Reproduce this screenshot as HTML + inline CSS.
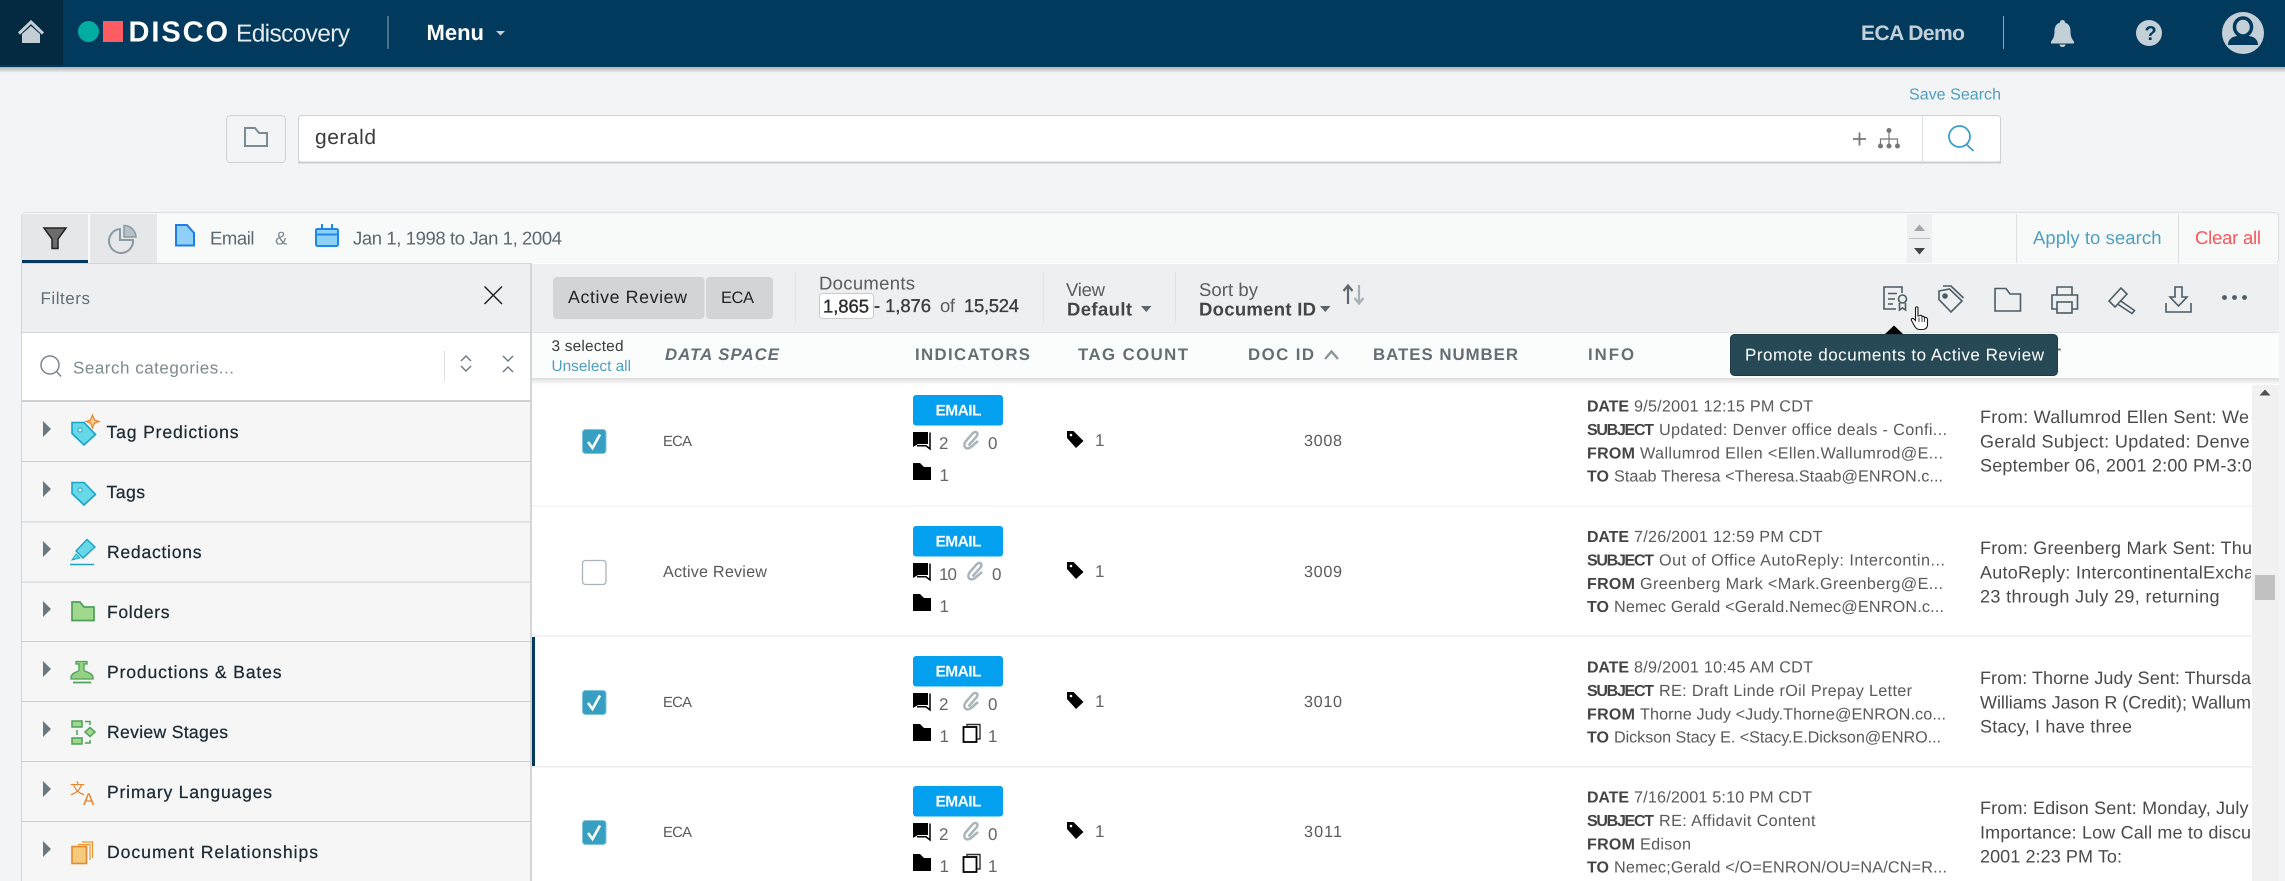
<!DOCTYPE html>
<html lang="en"><head><meta charset="utf-8"><title>DISCO Ediscovery</title>
<style>
html,body{margin:0;padding:0;width:2285px;height:881px;overflow:hidden;background:#f3f4f6}
svg{display:block}
text{font-family:"Liberation Sans",sans-serif;text-rendering:geometricPrecision;white-space:pre}
.b{font-weight:700}
.f17{font-size:18.5px}.f16{font-size:17px}.f15{font-size:16px}.f14{font-size:15.4px}
.lab{font-size:17.6px;fill:#1c2a33;stroke:#1c2a33;stroke-width:.25}
.hd{font-size:16.8px;font-weight:700;fill:#646e74}
.lb{font-size:16px;font-weight:700;fill:#444}
.vl{font-size:16.2px;fill:#5a5a5a}
.ex{font-size:18px;fill:#4a4a4a}
.ct{font-size:17px;fill:#666}
.tb{fill:none;stroke:#4c5c64;stroke-width:1.6}
</style></head><body>
<svg xmlns="http://www.w3.org/2000/svg" width="2285" height="881" viewBox="0 0 2285 881">
<defs>
<linearGradient id="sh" x1="0" y1="0" x2="0" y2="1"><stop offset="0" stop-color="#000" stop-opacity=".28"/><stop offset="1" stop-color="#000" stop-opacity="0"/></linearGradient>
<linearGradient id="sh2" x1="0" y1="0" x2="0" y2="1"><stop offset="0" stop-color="#000" stop-opacity=".14"/><stop offset="1" stop-color="#000" stop-opacity="0"/></linearGradient>
<clipPath id="exc"><rect x="1975" y="378" width="276" height="503"/></clipPath>
<g id="tri"><path d="M43 421 L51 429 L43 437Z" fill="#6a7880"/></g>
<g id="chk"><rect x="582.5" y="429.5" width="23.5" height="24" rx="3" fill="#379fc1" stroke="#7fc4da"/><path d="M588 442 L592.5 448 L600 434.5" fill="none" stroke="#fff" stroke-width="2.6"/></g>
<g id="badge"><rect x="913" y="395" width="90" height="30.5" rx="3" fill="#03a0f0"/><text x="935.5" y="415.5" font-size="15.5" class="b" fill="#fff" textLength="46">EMAIL</text></g>
<g id="cm"><path d="M913 432 H928 V444 H918 L913 447Z" fill="#000"/><path d="M930 432.500 V449 L926 445.800 H917" fill="none" stroke="#000" stroke-width="1.500"/></g>
<g id="fo"><path d="M913 463 H920 L924 467 H931 V480 H913Z" fill="#000"/></g>
<g id="tg"><path d="M1067 431 H1073.500 L1083.500 441 L1076 448 L1067 438Z" fill="#000"/><circle cx="1071" cy="435" r="1.300" fill="#fff"/></g>
<g id="clip"><path d="M968.500 445.500 L976.500 436.500 C979.500 432.500 975 430.500 972.500 433.500 L965.500 441.500 C962 447 967 450.500 971 447 L978 441" fill="none" stroke="#a9b5ba" stroke-width="2.500"/></g>
<g id="cp"><rect x="963.5" y="727" width="13" height="15" fill="#fff" stroke="#000" stroke-width="1.800"/><path d="M967 726 V724.5 H980 V739 H977" fill="none" stroke="#333" stroke-width="1.400"/></g>
</defs>

<rect width="2285" height="881" fill="#f3f4f6"/>

<!-- header -->
<rect width="2285" height="67" fill="#023a5d"/>
<rect y="67" width="2285" height="6" fill="url(#sh)"/>
<rect width="63" height="65" fill="#032a40"/>
<path d="M22 34 L31 26 L40 34 V43 H22Z" fill="#c3ced5"/>
<path d="M19 33.5 L31 22 L43 33.5" fill="none" stroke="#c3ced5" stroke-width="3"/>
<ellipse cx="88.5" cy="31.5" rx="10.5" ry="10.5" fill="#00ada0"/>
<rect x="103" y="21" width="20" height="21" fill="#ff5c62"/>
<text x="128.5" y="41.5" font-size="29" class="b" fill="#fff" textLength="99.5">DISCO</text>
<text x="236" y="41.5" font-size="24.5" fill="#e6ecf0" textLength="114">Ediscovery</text>
<rect x="387.5" y="16" width="1" height="33" fill="#8ea7b7"/>
<text x="426.5" y="40" font-size="22" class="b" fill="#fff" textLength="57.5">Menu</text>
<path d="M496 31 H505 L500.5 35.5Z" fill="#c3ced5"/>
<text x="1861" y="40" font-size="21" class="b" fill="#c3d0d8" textLength="104">ECA Demo</text>
<rect x="2003" y="16" width="1" height="33" fill="#8ea7b7"/>
<path d="M2062.5 20 C2064.5 20 2065 21.5 2065 22.5 C2069 24 2070.5 27 2070.5 31 C2070.5 37 2072 39 2074 41.5 V43.5 H2051 V41.5 C2053 39 2054.5 37 2054.5 31 C2054.5 27 2056 24 2060 22.5 C2060 21.5 2060.5 20 2062.5 20Z M2059.5 44.5 H2065.5 C2065.5 46 2064 47 2062.5 47 C2061 47 2059.5 46 2059.5 44.5Z" fill="#c3d0d8"/>
<circle cx="2149" cy="33" r="13" fill="#c3d0d8"/>
<text x="2144.5" y="40" font-size="20" class="b" fill="#023a5d" textLength="10">?</text>
<ellipse cx="2243" cy="33" rx="21" ry="21" fill="#c3d0d8"/>
<ellipse cx="2243" cy="27" rx="8.5" ry="9" fill="none" stroke="#023a5d" stroke-width="3.5"/>
<path d="M2228 45 C2228 39 2233 36 2238 36 H2248 C2253 36 2258 39 2258 45Z" fill="#023a5d"/>

<!-- search -->
<text x="1909" y="99.5" class="f15" fill="#4f9fc1" textLength="92">Save Search</text>
<rect x="226.5" y="115.5" width="59" height="47" rx="4" fill="#f3f4f6" stroke="#cfd2d5"/>
<path d="M245 128 H255 L259 133 H267 V146 H245Z" fill="none" stroke="#7b8b94" stroke-width="2"/>
<rect x="298.5" y="115.5" width="1702" height="47" rx="3" fill="#fff" stroke="#ced1d4"/>
<rect x="298" y="161.5" width="1703" height="2" fill="#cbced1"/>
<text x="315" y="144" font-size="21" fill="#3c3c3c" textLength="61">gerald</text>
<path d="M1853 139 H1866 M1859.5 132.5 V145.5" stroke="#777" stroke-width="1.800"/>
<circle cx="1889" cy="130.5" r="2.500" fill="#777"/>
<circle cx="1880.5" cy="146" r="2.500" fill="#777"/><circle cx="1889" cy="146" r="2.500" fill="#777"/><circle cx="1897.5" cy="146" r="2.500" fill="#777"/>
<path d="M1889 132 V145 M1880.5 145 V139 H1897.5 V145" fill="none" stroke="#777" stroke-width="1.200"/>
<rect x="1922" y="116" width="1" height="46" fill="#dcdfe1"/>
<circle cx="1959.5" cy="136.5" r="10.500" fill="none" stroke="#3aa0c5" stroke-width="1.800"/>
<path d="M1966.5 144.5 L1973.5 151" stroke="#3aa0c5" stroke-width="1.800"/>

<!-- filter bar -->
<rect x="21.5" y="212.5" width="2257" height="51" rx="4" fill="#f8f9f9" stroke="#dcdfe1"/>
<rect x="22" y="214" width="66" height="46" fill="#e6e7e8"/>
<rect x="22" y="260" width="66" height="3" fill="#023a5d"/>
<rect x="90" y="214" width="67" height="49" fill="#e6e7e8"/>
<path d="M44 228 H66 L58 239 V248.5 H52 V239 Z" fill="#6c6c6c" stroke="#222" stroke-width="1.500"/>
<path d="M120 229 A12 12 0 1 0 133 240 H120 Z" fill="none" stroke="#8a9aa2" stroke-width="2"/>
<path d="M124 225.5 A12 12 0 0 1 136 237 H124Z" fill="#b7c1c6" stroke="#8a9aa2" stroke-width="1.500"/>
<path d="M176 225 H187 L194 233 V245.5 H176Z" fill="#90d0f8" stroke="#1e7ee6" stroke-width="2"/>
<text x="210" y="244.5" class="f17" fill="#5b6770" textLength="44.5">Email</text>
<text x="275" y="244.5" class="f17" fill="#7d8a90" textLength="12.5">&amp;</text>
<rect x="316" y="229" width="22" height="17" rx="1.500" fill="#8fd0f8" stroke="#1e88e6" stroke-width="2"/>
<path d="M316 234.5 H338 M322 224 V229 M332 224 V229" stroke="#1e88e6" stroke-width="2"/>
<text x="353" y="244.5" class="f17" fill="#5b6770" textLength="209">Jan 1, 1998 to Jan 1, 2004</text>
<rect x="1907" y="214" width="25" height="49" fill="#eeeff0"/>
<path d="M1914 231 H1925 L1919.5 224.5Z" fill="#a3a6a8"/>
<rect x="1909" y="238" width="21" height="1" fill="#bcbfc1"/>
<path d="M1914 248 H1925 L1919.5 254.5Z" fill="#444"/>
<rect x="2016" y="214" width="1" height="49" fill="#dcdfe1"/>
<rect x="2178" y="214" width="1" height="49" fill="#dcdfe1"/>
<text x="2033" y="244" class="f17" fill="#4f9fc1" textLength="128.5">Apply to search</text>
<text x="2195" y="244" class="f17" fill="#f4575c" textLength="66">Clear all</text>

<!-- left panel -->
<rect x="21.5" y="263.5" width="509" height="630" fill="#f6f6f7" stroke="#d3d6d9"/>
<rect x="22" y="264" width="508" height="68.5" fill="#eeeff1"/>
<rect x="22" y="332" width="508" height="1" fill="#d3d6d9"/>
<text x="40.5" y="304" class="f16" fill="#636f77" textLength="49.5">Filters</text>
<path d="M484.5 286.5 L502 304 M502 286.5 L484.5 304" stroke="#222" stroke-width="1.500"/>
<rect x="22" y="333" width="508" height="67" fill="#fff"/>
<rect x="22" y="400" width="508" height="2" fill="#cdd1d4"/>
<circle cx="50" cy="365" r="9" fill="none" stroke="#7a868c" stroke-width="1.500"/>
<path d="M56.5 371.5 L61 376.5" stroke="#7a868c" stroke-width="1.500"/>
<text x="73" y="373.5" class="f16" fill="#7d8a90" textLength="161">Search categories...</text>
<rect x="444" y="350" width="1" height="32" fill="#dfe2e4"/>
<path d="M461 361 L466 356 L471 361 M461 366 L466 371 L471 366" fill="none" stroke="#6a7880" stroke-width="1.400"/>
<path d="M503 356 L508 361 L513 356 M503 372 L508 367 L513 372" fill="none" stroke="#6a7880" stroke-width="1.400"/>
<g fill="#ccd0d4"><rect x="22" y="461" width="508" height="1"/><rect x="22" y="521.5" width="508" height="1"/><rect x="22" y="581.5" width="508" height="1"/><rect x="22" y="641" width="508" height="1"/><rect x="22" y="701" width="508" height="1"/><rect x="22" y="761" width="508" height="1"/><rect x="22" y="821" width="508" height="1"/></g>
<use href="#tri"/><use href="#tri" y="60"/><use href="#tri" y="120"/><use href="#tri" y="180"/><use href="#tri" y="240"/><use href="#tri" y="300"/><use href="#tri" y="360"/><use href="#tri" y="420"/>
<text x="106.5" y="438" class="lab" textLength="132">Tag Predictions</text>
<text x="106.5" y="498" class="lab" textLength="38.5">Tags</text>
<text x="107" y="558" class="lab" textLength="94.5">Redactions</text>
<text x="107" y="618" class="lab" textLength="62.5">Folders</text>
<text x="107" y="678" class="lab" textLength="174.5">Productions &amp; Bates</text>
<text x="107" y="738" class="lab" textLength="121">Review Stages</text>
<text x="107" y="798" class="lab" textLength="165">Primary Languages</text>
<text x="107" y="858" class="lab" textLength="211">Document Relationships</text>
<!-- filter icons -->
<path d="M72 422.5 H84 L95.5 434.5 L84 445 L72 433.5Z" fill="#67d8e8" stroke="#1aa3c5" stroke-width="1.600"/><circle cx="80" cy="430" r="2" fill="#fff" stroke="#1aa3c5"/>
<path d="M92.5 415 L94.5 420 L99 421.5 L94.5 423 L92.5 428 L90.5 423 L86 421.5 L90.5 420Z" fill="#fbd08c" stroke="#e8842c" stroke-width="1.200"/>
<path d="M72 482.5 H84 L95.5 494.5 L84 505 L72 493.5Z" fill="#67d8e8" stroke="#1aa3c5" stroke-width="1.600"/><circle cx="80" cy="490" r="2" fill="#fff" stroke="#1aa3c5"/>
<path d="M76 551 L87 539.5 L95 547 L83 558Z" fill="#67d8e8" stroke="#1aa3c5" stroke-width="1.400"/>
<path d="M72 560 L76 554 L80 558Z" fill="#67d8e8" stroke="#1aa3c5"/><path d="M70 564.5 H94" stroke="#1aa3c5" stroke-width="1.600"/>
<path d="M72 602 H80 L84 607 H94 V620.5 H72Z" fill="#a0d88e" stroke="#4ea05a" stroke-width="1.700"/>
<path d="M76 661.5 H87 V664 H84 V670 C84 672 92 672 93 677 V679 H71 V677 C72 672 79 672 79 670 V664 H76Z" fill="#93d283" stroke="#4ea05a" stroke-width="1.300"/><path d="M73 682.5 H91" stroke="#4ea05a" stroke-width="1.800"/>
<rect x="72" y="721" width="10" height="6" fill="#a0d88e" stroke="#4ea05a" stroke-width="1.500"/><rect x="72" y="738" width="10" height="6" fill="#a0d88e" stroke="#4ea05a" stroke-width="1.500"/>
<path d="M77 730 V735 M85 721.5 H90 V725 M85 743 H90 V740" fill="none" stroke="#4ea05a" stroke-width="1.500"/><path d="M90 727.5 L95 732 L90 736.5 L85 732Z" fill="#a0d88e" stroke="#4ea05a" stroke-width="1.500"/>
<text x="70" y="794" font-size="15" fill="#e8842c" style="font-family:'Noto Sans CJK SC',sans-serif">文</text>
<text x="83" y="805" font-size="17" fill="#e8842c" textLength="12.5">A</text>
<path d="M82 842 H92.5 V858 M78 844.5 H90 V860" fill="none" stroke="#e8942c" stroke-width="1.200"/>
<rect x="72" y="846.5" width="14.5" height="17" fill="#f4ca7c" stroke="#e08a30" stroke-width="1.600"/>

<!-- main panel -->
<rect x="531" y="263" width="1748" height="618" fill="#fff"/>
<rect x="531" y="263" width="1" height="618" fill="#d3d6d9"/>
<rect x="532" y="264" width="1747" height="68" fill="#eeeff1"/>
<rect x="532" y="332" width="1747" height="1" fill="#dfe1e3"/>
<rect x="553" y="277" width="151.5" height="42" rx="4" fill="#d3d4d6"/>
<rect x="706" y="277" width="67" height="42" rx="4" fill="#d3d4d6"/>
<text x="568" y="303" font-size="17.8" fill="#222" textLength="119">Active Review</text>
<text x="721" y="303" font-size="16.5" fill="#222" textLength="33">ECA</text>
<rect x="795" y="272" width="1" height="51" fill="#dfe1e3"/>
<text x="819" y="289.5" class="f17" fill="#5b5b5b" textLength="96">Documents</text>
<rect x="819.5" y="293.5" width="54" height="25" rx="3" fill="#fff" stroke="#c9ccce"/>
<text x="823" y="312.5" class="f17" fill="#2a2a2a" stroke="#2a2a2a" stroke-width=".35" textLength="46">1,865</text>
<text x="874" y="312" class="f17" fill="#3c3c3c" stroke="#3c3c3c" stroke-width=".35" textLength="57">- 1,876</text>
<text x="940" y="312" class="f17" fill="#5b5b5b" textLength="15">of</text>
<text x="964" y="312" class="f17" fill="#3c3c3c" stroke="#3c3c3c" stroke-width=".35" textLength="55">15,524</text>
<rect x="1043" y="272" width="1" height="51" fill="#dfe1e3"/>
<text x="1066" y="296" class="f17" fill="#5b5b5b" textLength="39">View</text>
<text x="1067" y="315.5" class="f17 b" fill="#444" textLength="65">Default</text>
<path d="M1141 306 H1151.5 L1146.25 312Z" fill="#5c666c"/>
<rect x="1175" y="272" width="1" height="51" fill="#dfe1e3"/>
<text x="1199" y="296" class="f17" fill="#5b5b5b" textLength="59">Sort by</text>
<text x="1199" y="315.5" class="f17 b" fill="#444" textLength="117">Document ID</text>
<path d="M1320 306 H1330.5 L1325.25 312Z" fill="#5c666c"/>
<path d="M1348 304 V287 M1343.5 291 L1348 285.5 L1352.5 291" fill="none" stroke="#5c666c" stroke-width="2.200"/>
<path d="M1359 285 V302 M1354.5 298 L1359 303.5 L1363.5 298" fill="none" stroke="#a5aeb2" stroke-width="2.200"/>

<!-- toolbar icons -->
<g class="tb"><path d="M1896 309 H1884 V287 H1902 V293 M1888 293.5 H1897 M1888 299 H1895 M1888 304 H1893"/><circle cx="1902.5" cy="299" r="4"/><path d="M1899.5 303 V310 L1902.5 308 L1905.5 310 V303"/></g>
<g class="tb"><path d="M1939 291 V299.5 L1951 312 L1962 301 L1949.5 289Z"/><circle cx="1945" cy="296" r="2" fill="#4c5c64"/><path d="M1943 286 H1951 L1963.5 298"/></g>
<path class="tb" d="M1995 288.5 H2006 L2010 294 H2020.5 V311 H1995Z"/>
<g class="tb"><path d="M2057 295 V287 H2072 V295 M2057 309 H2052 V295 H2077.5 V309 H2072"/><rect x="2057" y="302" width="15" height="11"/></g>
<g class="tb"><path d="M2109 301 L2121 288 L2127 294 L2115 307 Z"/><path d="M2120 300.5 L2134.5 310.5 L2132 313.5 L2117.5 304"/></g>
<g class="tb"><path d="M2175 287 H2182 V297 H2187 L2178.5 306 L2170 297 H2175Z M2166 303 V312 H2191 V303"/></g>
<g fill="#4c5c64"><circle cx="2224.5" cy="297.5" r="2.400"/><circle cx="2234.5" cy="297.5" r="2.400"/><circle cx="2244.5" cy="297.5" r="2.400"/></g>

<!-- column headers -->
<rect x="532" y="333" width="1747" height="45" fill="#fbfcfc"/>
<rect x="532" y="378" width="1747" height="7" fill="url(#sh2)"/>
<text x="551.5" y="351" class="f14" fill="#3a3a3a" textLength="72">3 selected</text>
<text x="551.5" y="371" class="f14" fill="#4f9fc1" textLength="79.5">Unselect all</text>
<text x="665" y="360" class="hd" font-style="italic" textLength="114">DATA SPACE</text>
<text x="915" y="360" class="hd" textLength="115">INDICATORS</text>
<text x="1078" y="360" class="hd" textLength="110">TAG COUNT</text>
<text x="1248" y="360" class="hd" textLength="66">DOC ID</text>
<path d="M1325 359 L1331.5 351.5 L1338 359" fill="none" stroke="#8a959a" stroke-width="2.400"/>
<text x="1373" y="360" class="hd" textLength="145">BATES NUMBER</text>
<text x="1588" y="360" class="hd" textLength="46">INFO</text>
<text x="2040" y="360" class="hd" textLength="21">PT</text>

<!-- row separators -->
<rect x="532" y="505.5" width="1720" height="1" fill="#ececee"/>
<rect x="532" y="635" width="1720" height="2" fill="#f1f2f3"/>
<rect x="532" y="766" width="1720" height="1.500" fill="#ececee"/>
<rect x="532" y="637" width="3" height="129" fill="#023a5d"/>

<!-- row 1 -->
<g>
<use href="#chk"/>
<text x="663" y="446" font-size="14.8" fill="#5a5a5a" textLength="29">ECA</text>
<use href="#badge"/><use href="#cm"/><use href="#clip"/><use href="#fo"/><use href="#tg"/>
<text x="939" y="449" class="ct" textLength="8">2</text>
<text x="988" y="449" class="ct" textLength="8">0</text>
<text x="939.5" y="481" class="ct" textLength="7">1</text>
<text x="1095" y="446" class="ct" textLength="7">1</text>
<text x="1304" y="446" class="vl" textLength="38">3008</text>
<text x="1587" y="411.5" class="lb" textLength="42">DATE</text><text x="1634" y="411.5" class="vl" textLength="179">9/5/2001 12:15 PM CDT</text>
<text x="1587" y="435" class="lb" textLength="67">SUBJECT</text><text x="1659" y="435" class="vl" textLength="288">Updated: Denver office deals - Confi...</text>
<text x="1587" y="458.5" class="lb" textLength="48">FROM</text><text x="1640" y="458.5" class="vl" textLength="303">Wallumrod Ellen &lt;Ellen.Wallumrod@E...</text>
<text x="1587" y="481.5" class="lb" textLength="22">TO</text><text x="1614" y="481.5" class="vl" textLength="329">Staab Theresa &lt;Theresa.Staab@ENRON.c...</text>
<g clip-path="url(#exc)">
<text x="1980" y="423" class="ex" textLength="269">From: Wallumrod Ellen Sent: We</text>
<text x="1980" y="447.5" class="ex" textLength="276">Gerald Subject: Updated: Denver</text>
<text x="1980" y="471.5" class="ex" textLength="272">September 06, 2001 2:00 PM-3:0</text>
</g></g>

<!-- row 2 -->
<g transform="translate(0,131)">
<rect x="582.5" y="429.5" width="23.5" height="24" rx="3" fill="#fff" stroke="#aab4ba" stroke-width="1.300"/>
<text x="663" y="446" class="vl" textLength="104">Active Review</text>
<use href="#badge"/><use href="#cm"/><use href="#clip" x="4"/><use href="#fo"/><use href="#tg"/>
<text x="939" y="449" class="ct" textLength="18">10</text>
<text x="992" y="449" class="ct" textLength="8.5">0</text>
<text x="939.5" y="481" class="ct" textLength="7">1</text>
<text x="1095" y="446" class="ct" textLength="7">1</text>
<text x="1304" y="446" class="vl" textLength="38">3009</text>
<text x="1587" y="411" class="lb" textLength="42">DATE</text><text x="1634" y="411" class="vl" textLength="188.5">7/26/2001 12:59 PM CDT</text>
<text x="1587" y="434.5" class="lb" textLength="67">SUBJECT</text><text x="1659" y="434.5" class="vl" textLength="286">Out of Office AutoReply: Intercontin...</text>
<text x="1587" y="458" class="lb" textLength="48">FROM</text><text x="1640" y="458" class="vl" textLength="303">Greenberg Mark &lt;Mark.Greenberg@E...</text>
<text x="1587" y="481" class="lb" textLength="22">TO</text><text x="1614" y="481" class="vl" textLength="330">Nemec Gerald &lt;Gerald.Nemec@ENRON.c...</text>
<g clip-path="url(#exc)">
<text x="1980" y="423" class="ex" textLength="272">From: Greenberg Mark Sent: Thu</text>
<text x="1980" y="447.5" class="ex" textLength="274">AutoReply: IntercontinentalExcha</text>
<text x="1980" y="471.5" class="ex" textLength="239.5">23 through July 29, returning</text>
</g></g>

<!-- row 3 -->
<g transform="translate(0,261)">
<use href="#chk"/>
<text x="663" y="446" font-size="14.8" fill="#5a5a5a" textLength="29">ECA</text>
<use href="#badge"/><use href="#cm"/><use href="#clip"/><use href="#fo"/><use href="#tg"/>
<text x="939" y="449" class="ct" textLength="8">2</text>
<text x="988" y="449" class="ct" textLength="8">0</text>
<text x="939.5" y="481" class="ct" textLength="7">1</text>
<use href="#cp" y="-261"/>
<text x="988" y="481" class="ct" textLength="7">1</text>
<text x="1095" y="446" class="ct" textLength="7">1</text>
<text x="1304" y="446" class="vl" textLength="38">3010</text>
<text x="1587" y="411.5" class="lb" textLength="42">DATE</text><text x="1634" y="411.5" class="vl" textLength="179">8/9/2001 10:45 AM CDT</text>
<text x="1587" y="435" class="lb" textLength="67">SUBJECT</text><text x="1659" y="435" class="vl" textLength="253">RE: Draft Linde rOil Prepay Letter</text>
<text x="1587" y="458.5" class="lb" textLength="48">FROM</text><text x="1640" y="458.5" class="vl" textLength="306">Thorne Judy &lt;Judy.Thorne@ENRON.co...</text>
<text x="1587" y="481.5" class="lb" textLength="22">TO</text><text x="1614" y="481.5" class="vl" textLength="327">Dickson Stacy E. &lt;Stacy.E.Dickson@ENRO...</text>
<text x="1980" y="423" class="ex" textLength="271">From: Thorne Judy Sent: Thursda</text>
<text x="1980" y="447.5" class="ex" textLength="271">Williams Jason R (Credit); Wallum</text>
<text x="1980" y="471.5" class="ex" textLength="152">Stacy, I have three</text>
</g>

<!-- row 4 -->
<g transform="translate(0,391)">
<use href="#chk"/>
<text x="663" y="446" font-size="14.8" fill="#5a5a5a" textLength="29">ECA</text>
<use href="#badge"/><use href="#cm"/><use href="#clip"/><use href="#fo"/><use href="#tg"/>
<text x="939" y="449" class="ct" textLength="8">2</text>
<text x="988" y="449" class="ct" textLength="8">0</text>
<text x="939.5" y="481" class="ct" textLength="7">1</text>
<use href="#cp" y="-261"/>
<text x="988" y="481" class="ct" textLength="7">1</text>
<text x="1095" y="446" class="ct" textLength="7">1</text>
<text x="1304" y="446" class="vl" textLength="38">3011</text>
<text x="1587" y="411.5" class="lb" textLength="42">DATE</text><text x="1634" y="411.5" class="vl" textLength="178">7/16/2001 5:10 PM CDT</text>
<text x="1587" y="435" class="lb" textLength="67">SUBJECT</text><text x="1659" y="435" class="vl" textLength="156.5">RE: Affidavit Content</text>
<text x="1587" y="458.5" class="lb" textLength="48">FROM</text><text x="1640" y="458.5" class="vl" textLength="51">Edison</text>
<text x="1587" y="481.5" class="lb" textLength="22">TO</text><text x="1614" y="481.5" class="vl" textLength="333">Nemec;Gerald &lt;/O=ENRON/OU=NA/CN=R...</text>
<text x="1980" y="423" class="ex" textLength="268.5">From: Edison Sent: Monday, July</text>
<text x="1980" y="447.5" class="ex" textLength="271">Importance: Low Call me to discu</text>
<text x="1980" y="471.5" class="ex" textLength="142">2001 2:23 PM To:</text>
</g>

<!-- scrollbar -->
<rect x="2252" y="385" width="27" height="496" fill="#f1f1f1"/>
<path d="M2259.5 395.5 H2270.5 L2265 389.5Z" fill="#505050"/>
<rect x="2255" y="575" width="20" height="25" fill="#c1c1c1"/>

<!-- tooltip -->
<path d="M1885 334 L1894 325.5 L1903 334Z" fill="#000"/>
<rect x="1730.5" y="334.5" width="327" height="41" rx="4" fill="#274956" stroke="#1d3a47"/>
<text x="1745" y="360.5" font-size="17" fill="#fff" textLength="299">Promote documents to Active Review</text>

<!-- cursor -->
<path d="M1915.5 308 C1915.5 306.5 1918 306.5 1918 308 V316 L1920 315.5 C1921 315 1922 315.5 1922 316.5 C1923 316 1924 316.5 1924.5 317.5 C1925.5 317 1927 317.5 1927.5 319 V325 C1927.5 327.5 1925.5 329.5 1923 329.5 H1919.5 C1917 329.5 1916 328 1914.5 326 L1911.5 320.5 C1910.8 319 1912.5 317.5 1914 319 L1915.5 320.5Z" fill="#fff" stroke="#1a1a1a" stroke-width="1.100"/>
<path d="M1919 317.5 V322 M1922 317 V322 M1924.6 318 V322" stroke="#1a1a1a" stroke-width=".8"/>
</svg>
</body></html>
